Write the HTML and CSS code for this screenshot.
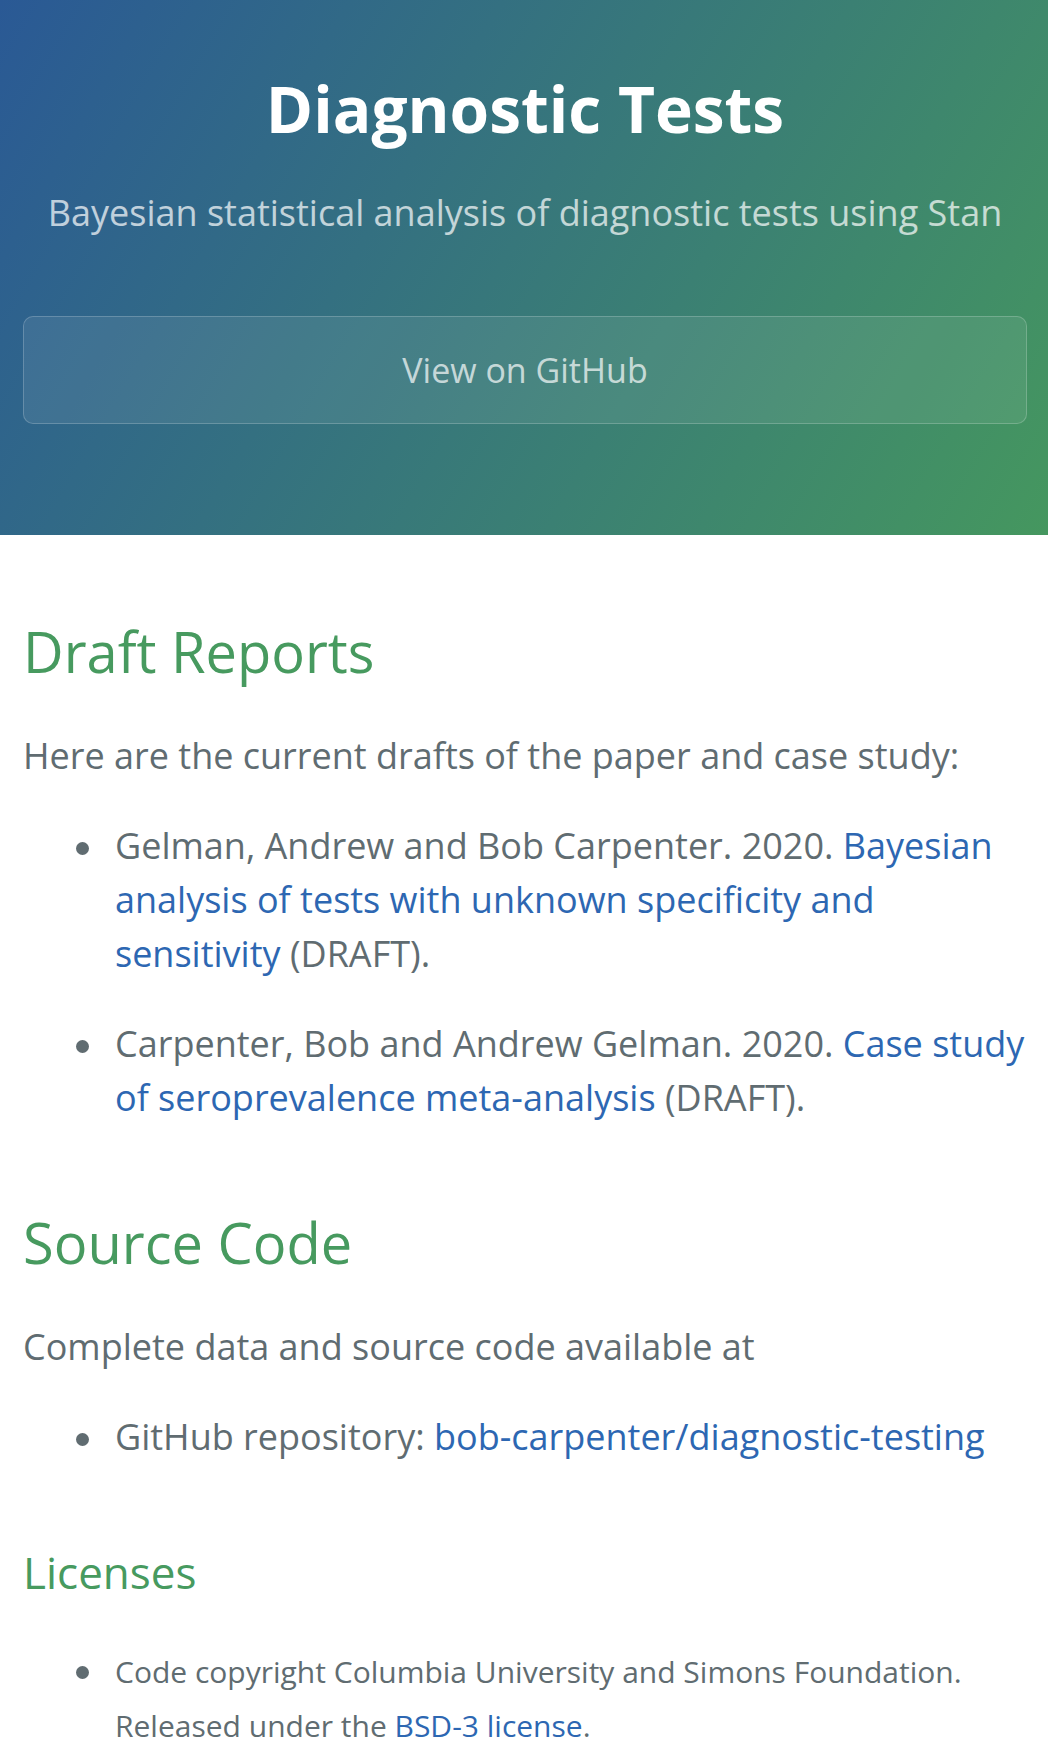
FILE: index.html
```html
<!DOCTYPE html>
<html lang="en">
<head>
<meta charset="utf-8">
<title>Diagnostic Tests</title>
<link rel="stylesheet" href="styles.css">
</head>
<body>
<header class="page-header">
  <h1 class="project-name">Diagnostic Tests</h1>
  <h2 class="project-tagline">Bayesian statistical analysis of diagnostic tests using Stan</h2>
  <a class="btn" href="#">View on GitHub</a>
</header>
<main class="main-content">
  <h2 class="section-title">Draft Reports</h2>
  <p class="para">Here are the current drafts of the paper and case study:</p>
  <ul class="list">
    <li class="item">Gelman, Andrew and Bob Carpenter. 2020. <a class="link" href="#">Bayesian analysis of tests with unknown specificity and sensitivity</a> (DRAFT).</li>
    <li class="item">Carpenter, Bob and Andrew Gelman. 2020. <a class="link" href="#">Case study of seroprevalence meta-analysis</a> (DRAFT).</li>
  </ul>
  <h2 class="section-title">Source Code</h2>
  <p class="para">Complete data and source code available at</p>
  <ul class="list">
    <li class="item">GitHub repository: <a class="link" href="#">bob-carpenter/diagnostic-testing</a></li>
  </ul>
  <h3 class="sub-title">Licenses</h3>
  <ul class="list">
    <li class="item"><span class="small">Code copyright Columbia University and Simons Foundation. Released under the <a class="link" href="#">BSD-3 license</a>.</span></li>
  </ul>
</main>
</body>
</html>
```
FILE: styles.css
```css
html, body {
  margin: 0;
  padding: 0;
}
body {
  font-family: "Open Sans", "Liberation Sans", sans-serif;
  color: #606c71;
  background: #ffffff;
}
.page-header {
  display: flex;
  flex-direction: column;
  align-items: stretch;
  text-align: center;
  color: #ffffff;
  background-color: #3a7a78;
  background-image: linear-gradient(120deg, #2a5995, #45975f);
  padding: 69px 21px 111px 23px;
}
.project-name {
  margin: 0;
  font-size: 64px;
  line-height: 80px;
  font-weight: 700;
}
.project-tagline {
  margin: 37px 0 0;
  font-size: 36px;
  line-height: 54px;
  font-weight: 400;
  opacity: 0.7;
}
.btn {
  display: block;
  margin-top: 76px;
  padding: 28px;
  border: 1px solid rgba(255, 255, 255, 0.2);
  border-radius: 10px;
  background-color: rgba(255, 255, 255, 0.08);
  color: rgba(255, 255, 255, 0.7);
  text-decoration: none;
  font-size: 34px;
  line-height: 50px;
}
.main-content {
  padding: 73px 23px 36px;
  font-size: 36px;
  line-height: 1.5;
}
.section-title {
  margin: 74px 0 34px;
  font-size: 56px;
  line-height: 87px;
  font-weight: 400;
  color: #479a5f;
}
.main-content > .section-title:first-child {
  margin-top: 0;
}
.sub-title {
  margin: 73px 0 36px;
  font-size: 44px;
  line-height: 70px;
  font-weight: 400;
  color: #479a5f;
}
.para {
  margin: 0 0 36px;
}
.list {
  margin: 0 0 36px;
  padding-left: 92px;
  list-style: none;
}
.item {
  margin-bottom: 36px;
}
.item::before {
  content: "";
  display: inline-block;
  width: 13px;
  height: 13px;
  margin-left: -39px;
  margin-right: 26px;
  border-radius: 50%;
  background: #606c71;
  vertical-align: 4px;
}
.link {
  color: #2d67b2;
  text-decoration: none;
}
.small {
  font-size: 30px;
}
```
